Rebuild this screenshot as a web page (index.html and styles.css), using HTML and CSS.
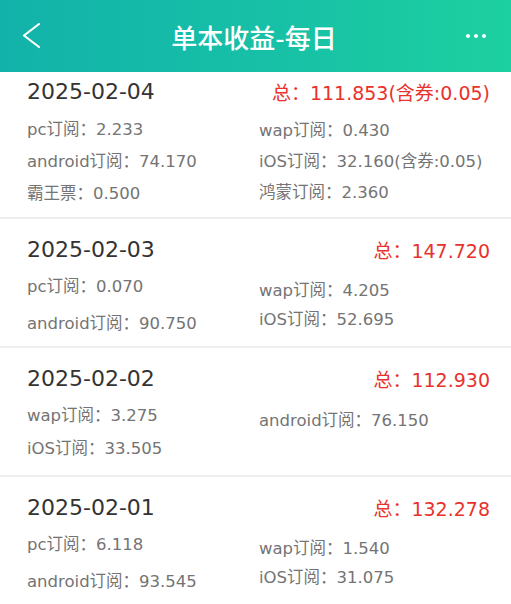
FILE: index.html
```html
<!DOCTYPE html>
<html>
<head>
    <meta charset="utf-8">
    <title>单本收益-每日</title>
    <link rel="stylesheet" href="styles.css">
</head>
<body>
    <header class="topbar">
        <span class="back">
            <svg width="20" height="26" viewBox="0 0 20 26"><polyline points="17,1 2,12.5 17,24" fill="none" stroke="#fff" stroke-width="2.2" stroke-linecap="round" stroke-linejoin="round"/></svg>
        </span>
        <h1 class="title">单本收益-每日</h1>
        <span class="more"><i></i><i></i><i></i></span>
    </header>

    <div class="list">
        <div class="day day--first">
            <div class="day-head">
                <span class="date">2025-02-04</span>
                <span class="total">总：111.853(含券:0.05)</span>
            </div>
            <div class="cols">
                <div class="col col-left">
                    <span>pc订阅：2.233</span>
                    <span>android订阅：74.170</span>
                    <span>霸王票：0.500</span>
                </div>
                <div class="col col-right">
                    <span>wap订阅：0.430</span>
                    <span>iOS订阅：32.160(含券:0.05)</span>
                    <span>鸿蒙订阅：2.360</span>
                </div>
            </div>
        </div>

        <div class="day">
            <div class="day-head">
                <span class="date">2025-02-03</span>
                <span class="total">总：147.720</span>
            </div>
            <div class="cols">
                <div class="col col-left">
                    <span>pc订阅：0.070</span>
                    <span>android订阅：90.750</span>
                </div>
                <div class="col col-right">
                    <span>wap订阅：4.205</span>
                    <span>iOS订阅：52.695</span>
                </div>
            </div>
        </div>

        <div class="day day--compact">
            <div class="day-head">
                <span class="date">2025-02-02</span>
                <span class="total">总：112.930</span>
            </div>
            <div class="cols">
                <div class="col col-left">
                    <span>wap订阅：3.275</span>
                    <span>iOS订阅：33.505</span>
                </div>
                <div class="col col-right">
                    <span>android订阅：76.150</span>
                </div>
            </div>
        </div>

        <div class="day">
            <div class="day-head">
                <span class="date">2025-02-01</span>
                <span class="total">总：132.278</span>
            </div>
            <div class="cols">
                <div class="col col-left">
                    <span>pc订阅：6.118</span>
                    <span>android订阅：93.545</span>
                </div>
                <div class="col col-right">
                    <span>wap订阅：1.540</span>
                    <span>iOS订阅：31.075</span>
                </div>
            </div>
        </div>
    </div>
</body>
</html>
```

FILE: styles.css
```css
body {
    margin: 0;
    padding: 0;
    font-family: "DejaVu Sans", "Noto Sans CJK SC", sans-serif;
    background-color: #fff;
    overflow: hidden;
}
.topbar {
    height: 72px;
    display: flex;
    align-items: center;
    justify-content: space-between;
    padding: 0 25px 0 22px;
    background: linear-gradient(90deg, #12b2aa 0%, #17c1a6 55%, #1dd0a0 100%);
    color: #fff;
    box-sizing: border-box;
}
.back {
    width: 20px;
    height: 26px;
    display: flex;
}
.title {
    margin: 0;
    font-size: 26px;
    font-weight: 500;
}
.more {
    display: flex;
    gap: 4px;
    width: 20px;
}
.more i {
    width: 4px;
    height: 4px;
    border-radius: 50%;
    background-color: #fff;
}
.day {
    height: 129px;
    box-sizing: border-box;
    padding: 17px 21px 0 27px;
    border-bottom: 2px solid #eeeeee;
}
.day-head {
    display: flex;
    justify-content: space-between;
    align-items: center;
    height: 26px;
}
.date {
    font-size: 22px;
    color: #333;
}
.total {
    font-size: 19px;
    color: #e8322b;
}
.cols {
    display: flex;
    margin-top: 13px;
    font-size: 16.5px;
    color: #747474;
}
.col {
    display: flex;
    flex-direction: column;
    line-height: 24px;
}
.col-left {
    width: 232px;
    gap: 13px;
}
.col-right {
    padding-top: 4px;
    gap: 5px;
}
.day--first {
    height: 147px;
    padding-top: 6px;
}
.day--first .cols {
    margin-top: 14px;
}
.day--first .col-left {
    gap: 8px;
}
.day--first .col-right {
    padding-top: 1px;
    gap: 7px;
}
.day--compact .col-left {
    gap: 9px;
}
.day--compact .col-right {
    padding-top: 5px;
}
```
